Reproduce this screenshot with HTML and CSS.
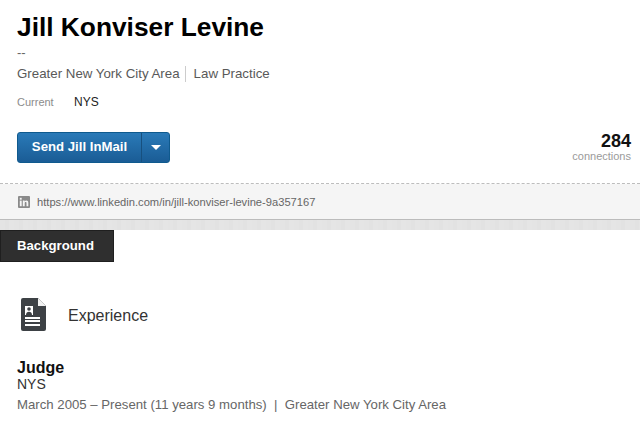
FILE: index.html
```html
<!DOCTYPE html>
<html lang="en">
<head>
  <meta charset="UTF-8" />
  <title>Jill Konviser Levine</title>
  <link rel="stylesheet" href="styles.css">
</head>
<body>
  <div class="top">
    <h1 class="name">Jill Konviser Levine</h1>
    <div class="headline">--</div>
    <div class="meta">
      <span>Greater New York City Area</span>
      <span class="metaSep"></span>
      <span>Law Practice</span>
    </div>
    <div class="current">
      <span class="currentLabel">Current</span>
      <span class="currentValue">NYS</span>
    </div>
    <div class="actionRow">
      <div class="sendBtn">
        <span class="sendLabel">Send Jill InMail</span>
        <span class="sendArrow"><span class="caret"></span></span>
      </div>
      <div class="connections">
        <div class="connCount">284</div>
        <div class="connLabel">connections</div>
      </div>
    </div>
  </div>

  <div class="urlBar">
    <svg class="inIcon" width="12" height="12" viewBox="0 0 12 12">
      <rect width="12" height="12" rx="1" fill="#8a8a8a"/>
      <rect x="1.800" y="4.600" width="1.900" height="5.600" fill="#f5f5f5"/>
      <rect x="1.800" y="1.800" width="1.900" height="1.900" fill="#f5f5f5"/>
      <path d="M4.800 4.600h1.800v.8c.4-.6 1-.9 1.700-.9 1.400 0 2 .8 2 2.300v3.400H8.500V7.100c0-.8-.2-1.200-.8-1.200s-1 .4-1 1.200v3.100H4.800z" fill="#f5f5f5"/>
    </svg>
    <span class="urlText">https://www.linkedin.com/in/jill-konviser-levine-9a357167</span>
  </div>

  <div class="bgStrip"></div>
  <div class="bgTab">Background</div>

  <div class="sectionHead">
    <svg class="expIcon" width="25" height="33" viewBox="0 0 25 33">
      <path d="M2 0h15L25 8v23a2 2 0 0 1-2 2H2a2 2 0 0 1-2-2V2a2 2 0 0 1 2-2z" fill="#3d4145"/>
      <path d="M17 0l8 8h-8z" fill="#f1f1f1"/>
      <rect x="4" y="8" width="8" height="9" fill="#fff"/>
      <circle cx="8" cy="11" r="1.800" fill="#3d4145"/>
      <path d="M5 17c0-2.300 1.300-3.300 3-3.300s3 1 3 3.300z" fill="#3d4145"/>
      <rect x="4" y="19" width="15" height="2" fill="#fff"/>
      <rect x="4" y="22" width="15" height="2" fill="#fff"/>
      <rect x="4" y="26" width="15" height="2" fill="#fff"/>
    </svg>
    <span class="sectionTitle">Experience</span>
  </div>

  <div class="job">
    <div class="jobTitle">Judge</div>
    <div class="jobOrg">NYS</div>
    <div class="jobMeta">March 2005 – Present (11 years 9 months)&nbsp; |&nbsp; Greater New York City Area</div>
  </div>
</body>
</html>
```

FILE: styles.css
```css
body {
  margin: 0;
  font-family: "Liberation Sans", Arial, sans-serif;
  background: #fff;
  overflow: hidden;
}
.top {
  padding: 12px 9px 0 17px;
  height: 184px;
  box-sizing: border-box;
  border-bottom: 1px dashed #bdbdbd;
}
.name {
  margin: 0;
  font-size: 26.3px;
  line-height: 30px;
  font-weight: bold;
  color: #000;
}
.headline {
  margin-top: 3px;
  font-size: 13px;
  line-height: 15px;
  color: #666;
}
.meta {
  display: flex;
  align-items: center;
  margin-top: 5px;
  font-size: 13.3px;
  line-height: 18px;
  color: #595959;
}
.metaSep {
  width: 1px;
  height: 16px;
  background: #ccc;
  margin: 0 8px 0 5px;
}
.current {
  display: flex;
  margin-top: 12px;
  line-height: 14px;
}
.currentLabel {
  width: 57px;
  font-size: 11px;
  color: #8c8c8c;
}
.currentValue {
  font-size: 12px;
  color: #222;
}
.actionRow {
  display: flex;
  justify-content: space-between;
  margin-top: 23px;
}
.sendBtn {
  display: flex;
  width: 153px;
  height: 31px;
  box-sizing: border-box;
  border: 1px solid #0f5a8e;
  border-radius: 3px;
  background: linear-gradient(#2a7ab8, #1a5c95);
  color: #fff;
  font-size: 13.2px;
  font-weight: bold;
}
.sendLabel {
  width: 123px;
  line-height: 27px;
  text-align: center;
  border-right: 1px solid #17507f;
}
.sendArrow {
  flex: 1;
  display: flex;
  align-items: center;
  justify-content: center;
}
.caret {
  width: 0;
  height: 0;
  border-left: 5px solid transparent;
  border-right: 5px solid transparent;
  border-top: 5px solid #fff;
}
.connections {
  text-align: right;
}
.connCount {
  font-size: 18px;
  line-height: 18px;
  font-weight: bold;
  color: #111;
}
.connLabel {
  font-size: 11px;
  line-height: 12px;
  color: #9a9a9a;
}
.urlBar {
  display: flex;
  align-items: center;
  height: 35px;
  padding-left: 18px;
  background: #f5f5f5;
  border-bottom: 1px solid #bcbcbc;
}
.inIcon {
  margin-right: 7px;
}
.urlText {
  font-size: 11.16px;
  color: #666;
}
.bgStrip {
  height: 10px;
  background: repeating-linear-gradient(90deg, #e4e4e4 0 5px, #e2e2e2 5px 9px, #e5e5e5 9px 14px);
}
.bgTab {
  width: 114px;
  height: 32px;
  box-sizing: border-box;
  padding-left: 16px;
  background: #2f2f2f;
  border: 1px solid #1f1f1f;
  color: #fff;
  font-size: 13.2px;
  font-weight: bold;
  line-height: 30px;
}
.sectionHead {
  display: flex;
  align-items: center;
  margin-top: 36px;
  padding-left: 21px;
}
.expIcon {
  margin-right: 22px;
}
.sectionTitle {
  padding-top: 2px;
  font-size: 16px;
  color: #333;
}
.job {
  margin-top: 28px;
  padding-left: 17px;
}
.jobTitle {
  font-size: 16px;
  line-height: 18px;
  font-weight: bold;
  color: #111;
}
.jobOrg {
  font-size: 14px;
  line-height: 15px;
  color: #333;
}
.jobMeta {
  margin-top: 5px;
  font-size: 13.2px;
  line-height: 16px;
  color: #666;
}
```
